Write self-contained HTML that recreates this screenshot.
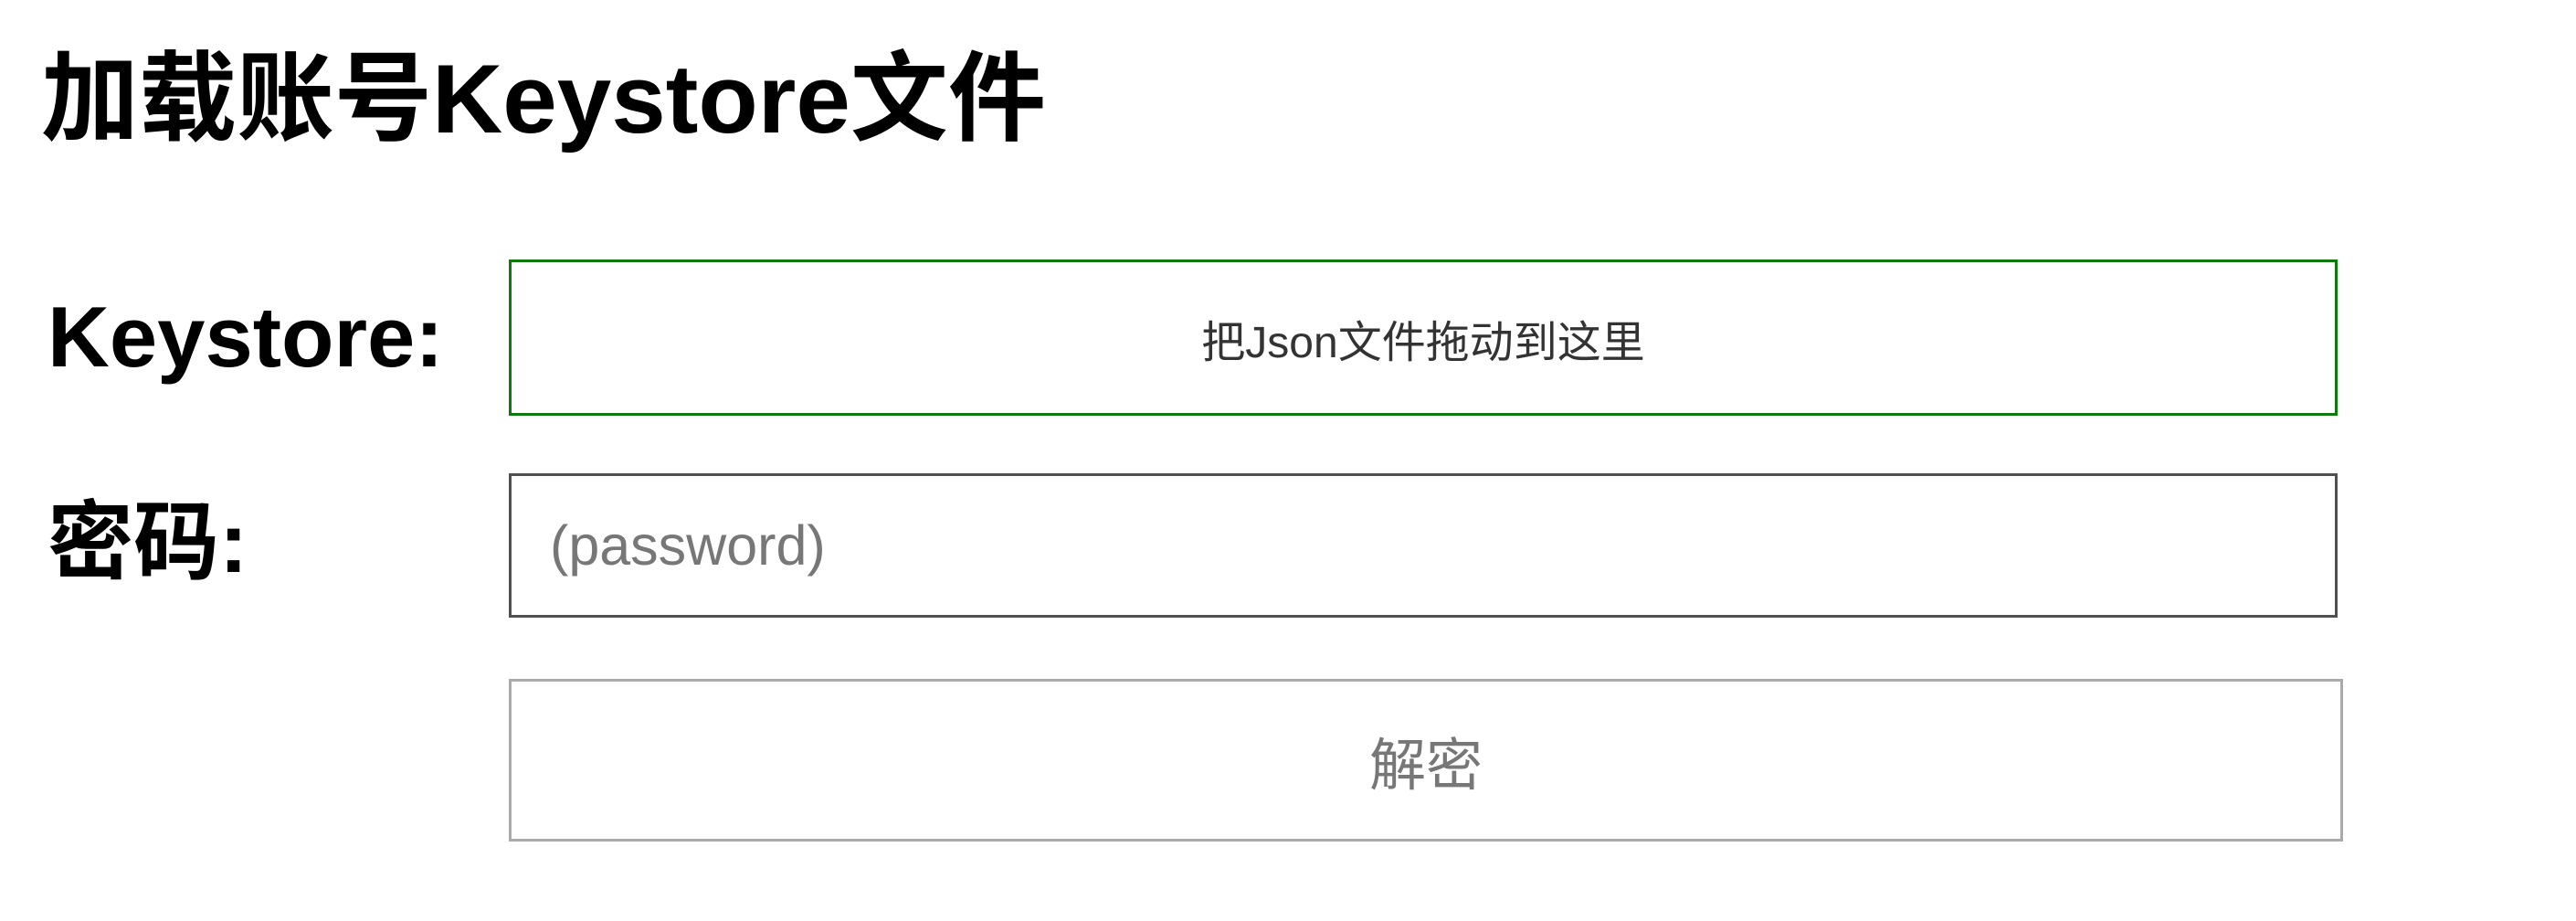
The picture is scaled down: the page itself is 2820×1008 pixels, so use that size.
<!DOCTYPE html>
<html><head><meta charset="utf-8"><style>
html,body{margin:0;padding:0;background:#fff;width:2820px;height:1008px;overflow:hidden;font-family:"Liberation Sans","Noto Sans CJK SC",sans-serif;}
.a{position:absolute;}
.title{left:45px;top:48px;font-size:107px;font-weight:bold;line-height:120px;color:#000;white-space:nowrap;}
.lbl{left:52px;font-size:94px;font-weight:bold;color:#000;line-height:100px;white-space:nowrap;}
.box{box-sizing:border-box;display:flex;align-items:center;}
</style></head><body>
<div class="a title">加载账号Keystore文件</div>
<div class="a lbl" style="top:319px">Keystore:</div>
<div class="a lbl" style="top:544px">密码:</div>
<div class="a box" style="left:557px;top:284px;width:2002px;height:171px;border:3px solid #0c7a0c;justify-content:center;font-size:48px;color:#333;">把Json文件拖动到这里</div>
<div class="a box" style="left:557px;top:518px;width:2002px;height:158px;border:3px solid #505050;padding-left:42px;font-size:61px;color:#777;">(password)</div>
<div class="a box" style="left:557px;top:743px;width:2008px;height:178px;border:3px solid #aaa;justify-content:center;font-size:62px;color:#777;">解密</div>
</body></html>
